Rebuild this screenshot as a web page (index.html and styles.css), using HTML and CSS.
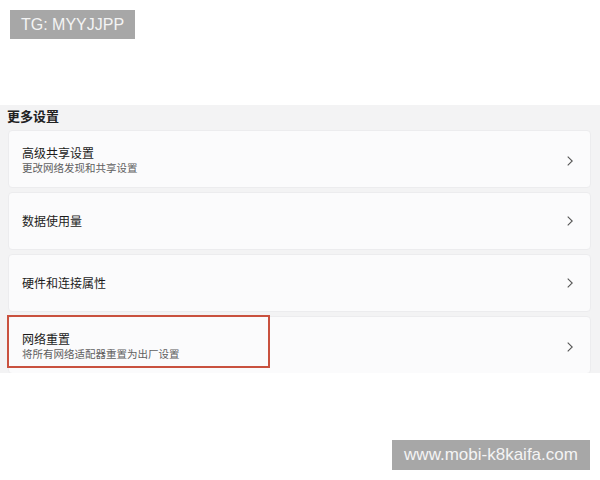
FILE: index.html
```html
<!DOCTYPE html>
<html lang="zh-CN">
<head>
<meta charset="utf-8">
<title>更多设置</title>
<link rel="stylesheet" href="styles.css">
</head>
<body>
<div class="page">
  <div class="wm wm-top">TG: MYYJJPP</div>
  <section class="panel">
    <h2 class="panel-title">更多设置</h2>
    <div class="list">
      <div class="card two-line">
        <div class="text">
          <div class="title">高级共享设置</div>
          <div class="sub">更改网络发现和共享设置</div>
        </div>
        <svg class="chev" viewBox="0 0 6 10" width="6" height="10"><polyline points="0.7,0.7 5.2,5 0.7,9.3" fill="none" stroke="#555" stroke-width="1.1"/></svg>
      </div>
      <div class="card">
        <div class="text"><div class="title">数据使用量</div></div>
        <svg class="chev" viewBox="0 0 6 10" width="6" height="10"><polyline points="0.7,0.7 5.2,5 0.7,9.3" fill="none" stroke="#555" stroke-width="1.1"/></svg>
      </div>
      <div class="card">
        <div class="text"><div class="title">硬件和连接属性</div></div>
        <svg class="chev" viewBox="0 0 6 10" width="6" height="10"><polyline points="0.7,0.7 5.2,5 0.7,9.3" fill="none" stroke="#555" stroke-width="1.1"/></svg>
      </div>
      <div class="card two-line highlighted">
        <div class="text">
          <div class="title">网络重置</div>
          <div class="sub">将所有网络适配器重置为出厂设置</div>
        </div>
        <svg class="chev" viewBox="0 0 6 10" width="6" height="10"><polyline points="0.7,0.7 5.2,5 0.7,9.3" fill="none" stroke="#555" stroke-width="1.1"/></svg>
        <div class="mark"></div>
      </div>
    </div>
  </section>
  <div class="wm wm-bottom">www.mobi-k8kaifa.com</div>
</div>
</body>
</html>
```
FILE: styles.css
```css
html, body {
  margin: 0;
  padding: 0;
  background: #ffffff;
}
.page {
  position: relative;
  width: 600px;
  height: 480px;
  overflow: hidden;
  font-family: "Noto Sans CJK SC", "Noto Sans", sans-serif;
}
.wm {
  position: absolute;
  background: #a7a7a7;
  color: #f4f4f4;
  font-family: "Liberation Sans", Arial, sans-serif;
  display: flex;
  align-items: center;
  justify-content: center;
}
.wm-top {
  left: 10px;
  top: 10px;
  width: 125px;
  height: 29px;
  font-size: 16px;
}
.wm-bottom {
  left: 392px;
  top: 440px;
  width: 198px;
  height: 30px;
  font-size: 17px;
}
.panel {
  margin-top: 105px;
  height: 268px;
  overflow: hidden;
  background: #f3f3f4;
}
.panel-title {
  margin: 0;
  padding: 2px 0 0 7px;
  height: 23px;
  font-size: 13px;
  line-height: 18px;
  font-weight: 600;
  color: #222222;
}
.list {
  display: flex;
  flex-direction: column;
  gap: 4px;
  padding: 0 9px 0 8px;
}
.card {
  position: relative;
  height: 58px;
  box-sizing: border-box;
  background: #fbfbfc;
  border: 1px solid #ececee;
  border-radius: 4px;
  display: flex;
  align-items: center;
  padding: 0 17px 0 13px;
}
.card.two-line {
  align-items: flex-start;
  padding-top: 14px;
}
.card.two-line .chev {
  margin-top: 11px;
}
.text {
  flex: 1;
  display: flex;
  flex-direction: column;
}
.title {
  font-size: 12px;
  line-height: 16px;
  color: #1b1b1b;
}
.sub {
  font-size: 10.5px;
  line-height: 14px;
  color: #606060;
}
.chev {
  flex: none;
  display: block;
}
.mark {
  position: absolute;
  left: -2px;
  top: -2px;
  width: 263px;
  height: 53px;
  box-sizing: border-box;
  border: 2px solid #c9513e;
}
```
